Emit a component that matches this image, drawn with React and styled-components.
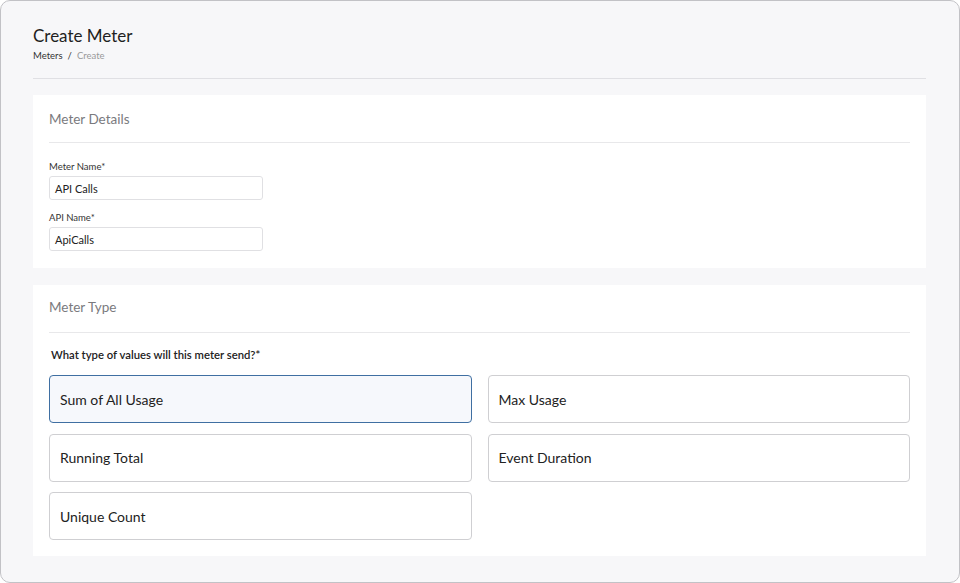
import React from "react";
import styled, { createGlobalStyle } from "styled-components";

const GlobalStyle = createGlobalStyle`
  html, body {
    margin: 0;
    padding: 0;
    background: #ffffff;
  }
  * {
    box-sizing: border-box;
  }
`;

const Frame = styled.div`
  width: 960px;
  height: 583px;
  border: 1px solid #c2c2c6;
  border-radius: 10px;
  background: #f7f7f9;
  padding: 0 33px 0 32px;
  overflow: hidden;
  font-family: "Lato", "Noto Sans", sans-serif;
  color: #222;
`;

const PageHeader = styled.header`
  padding-top: 25px;
  padding-bottom: 15px;
  border-bottom: 1px solid #e0e0e4;
`;

const Title = styled.h1`
  margin: 0;
  font-size: 17px;
  line-height: 20px;
  font-weight: 400;
  color: #1f1f22;
`;

const Crumbs = styled.nav`
  margin-top: 3px;
  display: flex;
  gap: 5px;
  font-size: 9.5px;
  line-height: 14px;
  color: #333;
`;

const Crumb = styled.span`
  color: ${(p) => (p.$muted ? "#999" : "#333")};
`;

const Card = styled.section`
  background: #ffffff;
  margin-top: ${(p) => p.$gap || 16}px;
  padding: 0 16px ${(p) => p.$bottom || 16}px;
`;

const CardHeader = styled.h2`
  margin: 0;
  padding: ${(p) => p.$top || 16}px 0 ${(p) => 31 - (p.$top || 16)}px;
  font-size: 13.5px;
  line-height: 16px;
  font-weight: 400;
  color: #7a7a7e;
  border-bottom: 1px solid #e8e8ea;
`;

const Field = styled.div`
  display: flex;
  flex-direction: column;
  gap: 3px;
  margin-top: ${(p) => p.$top}px;
`;

const Label = styled.label`
  font-size: 9.5px;
  line-height: 13px;
  color: #333;
`;

const Input = styled.div`
  width: 214px;
  height: 24px;
  border: 1px solid #e0e0e3;
  border-radius: 3px;
  padding: 0 5px;
  display: flex;
  align-items: center;
  font-size: 11px;
  color: #222;
`;

const Question = styled.p`
  margin: 15px 0 0 2px;
  font-size: 11.3px;
  line-height: 14px;
  font-weight: 600;
  color: #222;
`;

const OptionGrid = styled.div`
  margin-top: 13px;
  display: grid;
  grid-template-columns: 1fr 1fr;
  column-gap: 16px;
  row-gap: 10.5px;
`;

const Option = styled.div`
  height: 48px;
  border: 1.5px solid ${(p) => (p.$selected ? "#3f6fa2" : "#cfcfd2")};
  background: ${(p) => (p.$selected ? "#f6f8fc" : "#ffffff")};
  border-radius: 4px;
  padding: 0 10px;
  display: flex;
  align-items: center;
  font-size: 14px;
  color: #222;
`;

const options = [
  { label: "Sum of All Usage", selected: true },
  { label: "Max Usage" },
  { label: "Running Total" },
  { label: "Event Duration" },
  { label: "Unique Count" },
];

const App = () => (
  <>
    <GlobalStyle />
    <Frame>
      <PageHeader>
        <Title>Create Meter</Title>
        <Crumbs>
          <Crumb>Meters</Crumb>
          <Crumb>/</Crumb>
          <Crumb $muted>Create</Crumb>
        </Crumbs>
      </PageHeader>

      <Card $bottom={17}>
        <CardHeader>Meter Details</CardHeader>
        <Field $top={17}>
          <Label>Meter Name*</Label>
          <Input>API Calls</Input>
        </Field>
        <Field $top={11}>
          <Label>API Name*</Label>
          <Input>ApiCalls</Input>
        </Field>
      </Card>

      <Card $gap={17}>
        <CardHeader $top={14}>Meter Type</CardHeader>
        <Question>What type of values will this meter send?*</Question>
        <OptionGrid>
          {options.map((o) => (
            <Option key={o.label} $selected={o.selected}>
              {o.label}
            </Option>
          ))}
        </OptionGrid>
      </Card>
    </Frame>
  </>
);

export default App;
